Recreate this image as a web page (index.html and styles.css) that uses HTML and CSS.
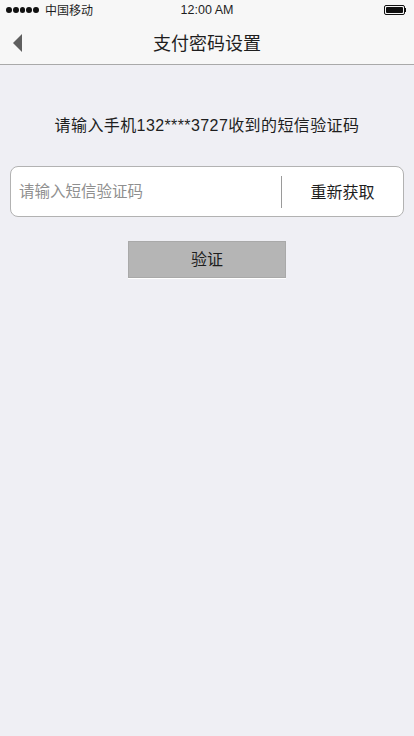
FILE: index.html
```html
<!DOCTYPE html>
<html lang="zh-CN">
<head>
<meta charset="utf-8">
<meta name="viewport" content="width=device-width, initial-scale=1">
<title>支付密码设置</title>
<link rel="stylesheet" href="styles.css">
</head>
<body>
<div class="top">
  <div class="status">
    <div class="status-left">
      <span class="dots"><i></i><i></i><i></i><i></i><i></i></span>
      <span class="carrier">中国移动</span>
    </div>
    <div class="time">12:00 AM</div>
    <div class="status-right">
      <span class="battery"><span class="battery-fill"></span></span><span class="battery-nub"></span>
    </div>
  </div>
  <div class="nav">
    <span class="back"><svg width="10" height="18" viewBox="0 0 10 18"><polygon points="9,0 9,18 0,9" fill="#5f5f5f"/></svg></span>
    <h1 class="title">支付密码设置</h1>
  </div>
</div>
<main class="content">
  <p class="hint">请输入手机132****3727收到的短信验证码</p>
  <div class="code-box">
    <input class="code-input" type="text" placeholder="请输入短信验证码">
    <span class="divider"></span>
    <span class="resend">重新获取</span>
  </div>
  <div class="actions">
    <button class="verify" type="button">验证</button>
  </div>
</main>
</body>
</html>
```
FILE: styles.css
```css
* { box-sizing: border-box; }
html, body {
  margin: 0;
  padding: 0;
  background: #efeff4;
  font-family: "Liberation Sans", "Noto Sans CJK SC", sans-serif;
  color: #1e1e1e;
}
body { width: 414px; min-height: 736px; }

.top {
  background: #f7f7f7;
  border-bottom: 1px solid #a9a9a9;
}
.status {
  height: 20px;
  display: flex;
  align-items: center;
  justify-content: space-between;
  padding: 0 8px 0 6px;
  font-size: 12px;
  position: relative;
}
.status-left { display: flex; align-items: center; gap: 6px; }
.dots { display: flex; gap: 1px; }
.dots i {
  width: 5.8px; height: 5.8px; border-radius: 50%;
  background: #111; display: block;
}
.carrier { font-size: 12px; line-height: 20px; font-family: "Noto Sans CJK SC", sans-serif; }
.time {
  position: absolute;
  left: 0; right: 0; text-align: center;
  font-size: 12.5px; line-height: 20px;
  pointer-events: none;
}
.status-right { display: flex; align-items: center; }
.battery {
  width: 21px; height: 10px;
  border: 1px solid #111; border-radius: 2px;
  padding: 1px; display: block;
}
.battery-fill { display: block; width: 100%; height: 100%; background: #111; border-radius: 1px; }
.battery-nub { width: 1.5px; height: 4px; background: #111; display: block; }

.nav {
  height: 44px;
  display: flex;
  align-items: center;
  justify-content: center;
  position: relative;
}
.back {
  position: absolute;
  left: 13px; top: 14px;
  width: 10px; height: 18px;
  display: block;
}
.back svg { display: block; }
.title {
  margin: 0;
  font-size: 18px;
  font-weight: normal;
  font-family: "Noto Sans CJK SC", sans-serif;
  line-height: 44px;
  color: #1e1e1e;
}

.content { padding: 0 10px; }
.hint {
  margin: 51px 0 0;
  text-align: center;
  font-size: 16px;
  line-height: 20px;
  letter-spacing: 0.4px;
  color: #1e1e1e;
}
.code-box {
  margin-top: 30px;
  height: 51px;
  background: #fff;
  border: 1px solid #b2b2b2;
  border-radius: 8px;
  display: flex;
  align-items: center;
}
.code-input {
  flex: 1;
  min-width: 0;
  height: 100%;
  border: 0;
  outline: none;
  background: transparent;
  padding: 0 0 3px 8px;
  font-size: 15.5px;
  font-family: "Noto Sans CJK SC", sans-serif;
  color: #1e1e1e;
}
.code-input::placeholder { color: #8f8f8f; }
.divider {
  width: 1px;
  height: 32px;
  background: #9a9a9a;
}
.resend {
  width: 121px;
  text-align: center;
  font-size: 16px;
  font-family: "Noto Sans CJK SC", sans-serif;
  color: #1e1e1e;
  padding-bottom: 2px;
}
.actions {
  margin-top: 24px;
  display: flex;
  justify-content: center;
}
.verify {
  width: 158px;
  height: 37px;
  background: #b5b5b5;
  border: 1px solid #a9a9a9;
  border-radius: 0;
  box-shadow: 0 1px 0 #ffffff;
  font-size: 16px;
  font-family: "Noto Sans CJK SC", sans-serif;
  color: #1e1e1e;
  padding: 0 0 3px;
}
```
